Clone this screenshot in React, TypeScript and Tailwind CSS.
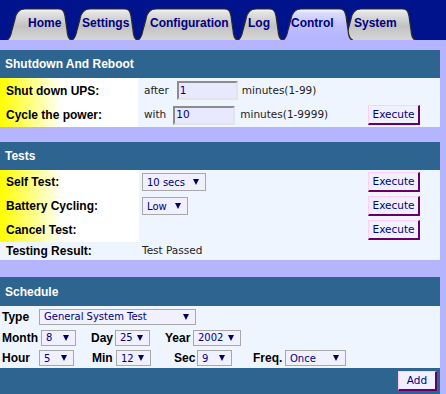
import React from "react";

const tabs = [
  { label: "Home", w: 65, cls: "w-[65px] pl-[21px]" },
  { label: "Settings", w: 66, cls: "w-[66px] pl-[10px]" },
  { label: "Configuration", w: 100, cls: "w-[100px] pl-[12px]" },
  { label: "Log", w: 45, cls: "w-[45px] pl-[10px]" },
  { label: "Control", w: 70, cls: "w-[70px] pl-[8px] z-10", active: true },
  { label: "System", w: 73, cls: "w-[73px] pl-[11px] -ml-[10px]" },
];

function tabPath(w: number) {
  return `M0,32 C3,31 4,27 5,22 L8,11 C9,5 12,1 18,1 L${w - 14},1 C${w - 9},1 ${w - 8},3 ${w - 7},8 L${w - 5},22 C${w - 4.5},29 ${w - 2},32 ${w},32`;
}

function Tab({ label, w, cls, active }: { label: string; w: number; cls: string; active?: boolean }) {
  const id = `tabfill-${label}`;
  return (
    <div className={`relative flex h-[32px] items-center pb-[3px] ${cls}`}>
      <svg className="absolute inset-0" width={w} height={32} viewBox={`0 0 ${w} 32`}>
        <defs>
          <linearGradient id={id} x1="0" y1="0" x2="0" y2="1">
            {active ? (
              <>
                <stop offset="0" stopColor="#ffffff" />
                <stop offset="0.12" stopColor="#dcdcff" />
                <stop offset="0.6" stopColor="#bdbdff" />
                <stop offset="1" stopColor="#b4b4ff" />
              </>
            ) : (
              <>
                <stop offset="0" stopColor="#ffffff" />
                <stop offset="0.1" stopColor="#e4e4e4" />
                <stop offset="0.55" stopColor="#c2c2c2" />
                <stop offset="1" stopColor="#d6d6d6" />
              </>
            )}
          </linearGradient>
        </defs>
        <path d={tabPath(w)} fill={`url(#${id})`} stroke="#2a2a2a" strokeWidth="1.2" />
      </svg>
      <span className="relative text-[12px] font-bold text-[#000080]">{label}</span>
    </div>
  );
}

function Tri() {
  return (
    <svg width="6" height="6" viewBox="0 0 6 6" className="shrink-0">
      <path d="M0 0H6L3 6Z" fill="#000060" />
    </svg>
  );
}

function Select({ value, cls }: { value: string; cls: string }) {
  return (
    <span
      className={`flex items-center justify-between border border-[#a8a8a8] bg-[#f0f0ff] pl-[4px] pr-[6px] font-['DejaVu_Sans',sans-serif] text-[10px] text-[#000080] ${cls}`}
    >
      {value}
      <Tri />
    </span>
  );
}

function Button({ children, cls }: { children: React.ReactNode; cls: string }) {
  return (
    <button
      className={`flex items-center justify-center border-t border-l border-r-2 border-b-2 border-t-[#ffccff] border-l-[#ffccff] border-r-[#660066] border-b-[#660066] bg-[#f0f0ff] font-['DejaVu_Sans',sans-serif] text-[10.5px] text-[#000080] ${cls}`}
    >
      {children}
    </button>
  );
}

function Field({ value, cls }: { value: string; cls: string }) {
  return (
    <span
      className={`flex h-[19px] items-center border-2 border-t-[#8c8c8c] border-l-[#8c8c8c] border-r-[#e4e4e4] border-b-[#e4e4e4] bg-[#e8e8ff] pl-[1px] font-['DejaVu_Sans',sans-serif] text-[10.5px] text-[#000080] ${cls}`}
    >
      {value}
    </span>
  );
}

const header = "flex items-center bg-[#2e6590] px-[5px] text-[12px] font-bold text-white";
const yellow = "flex items-center bg-[linear-gradient(90deg,#ffff00_0%,#ffffff_45%)] pl-[6px] text-[12px] font-bold text-black";
const plain = "font-['DejaVu_Sans',sans-serif] text-[10.5px] text-[#222]";
const bold = "text-[12px] font-bold text-black";

export default function App() {
  return (
    <div className="h-[394px] w-[446px] overflow-hidden bg-[#b4b4ff] font-['Liberation_Sans',Arial,sans-serif]">
      <nav className="flex h-[40px] items-end bg-[#00128c] pl-[7px]">
        {tabs.map((t) => (
          <Tab key={t.label} {...t} />
        ))}
      </nav>

      <main className="flex flex-col pt-[10px] pr-[6px]">
        <section>
          <div className={`${header} h-[28px]`}>Shutdown And Reboot</div>
          <div className="grid grid-cols-[138px_230px_1fr] bg-[#eef5ff]">
            <div className={`${yellow} h-[25px]`}>Shut down UPS:</div>
            <div className={`flex items-center pl-[6px] ${plain}`}>
              after
              <Field value="1" cls="ml-[8px] w-[61px]" />
              <span className="ml-[4px]">minutes(1-99)</span>
            </div>
            <div />
            <div className={`${yellow} h-[24px]`}>Cycle the power:</div>
            <div className={`flex items-center pl-[6px] ${plain}`}>
              with
              <Field value="10" cls="ml-[7px] w-[62px]" />
              <span className="ml-[5px]">minutes(1-9999)</span>
            </div>
            <div className="flex items-center">
              <Button cls="h-[20px] w-[52px]">Execute</Button>
            </div>
          </div>
        </section>

        <section className="mt-[15px]">
          <div className={`${header} h-[28px]`}>Tests</div>
          <div className="grid grid-cols-[139px_229px_1fr] bg-[#eef5ff]">
            <div className={`${yellow} h-[24px]`}>Self Test:</div>
            <div className="flex items-center pl-[3px]">
              <Select value="10 secs" cls="h-[18px] w-[64px]" />
            </div>
            <div className="flex items-center">
              <Button cls="h-[20px] w-[52px]">Execute</Button>
            </div>
            <div className={`${yellow} h-[24px]`}>Battery Cycling:</div>
            <div className="flex items-center pl-[3px]">
              <Select value="Low" cls="h-[18px] w-[46px]" />
            </div>
            <div className="flex items-center">
              <Button cls="h-[20px] w-[52px]">Execute</Button>
            </div>
            <div className={`${yellow} h-[24px]`}>Cancel Test:</div>
            <div />
            <div className="flex items-center">
              <Button cls="h-[20px] w-[52px]">Execute</Button>
            </div>
            <div className={`flex h-[18px] items-center pl-[6px] ${bold}`}>Testing Result:</div>
            <div className={`flex items-center pl-[3px] ${plain}`}>Test Passed</div>
            <div />
          </div>
        </section>

        <section className="mt-[17px]">
          <div className={`${header} h-[29px]`}>Schedule</div>
          <div className="flex flex-col bg-[#eef5ff] pl-[2px]">
            <div className="flex h-[21px] items-center">
              <span className={`w-[37px] ${bold}`}>Type</span>
              <Select value="General System Test" cls="h-[16px] w-[157px]" />
            </div>
            <div className="flex h-[21px] items-center">
              <span className={`w-[39px] ${bold}`}>Month</span>
              <Select value="8" cls="h-[16px] w-[35px]" />
              <span className={`ml-[15px] w-[24px] ${bold}`}>Day</span>
              <Select value="25" cls="h-[16px] w-[35px]" />
              <span className={`ml-[15px] w-[28px] ${bold}`}>Year</span>
              <Select value="2002" cls="h-[16px] w-[48px]" />
            </div>
            <div className="flex h-[20px] items-center">
              <span className={`w-[37px] ${bold}`}>Hour</span>
              <Select value="5" cls="h-[16px] w-[35px]" />
              <span className={`ml-[18px] w-[24px] ${bold}`}>Min</span>
              <Select value="12" cls="h-[16px] w-[35px]" />
              <span className={`ml-[23px] w-[23px] ${bold}`}>Sec</span>
              <Select value="9" cls="h-[16px] w-[35px]" />
              <span className={`ml-[21px] w-[32px] ${bold}`}>Freq.</span>
              <Select value="Once" cls="h-[16px] w-[61px]" />
            </div>
          </div>
          <div className="flex h-[26px] items-start justify-end bg-[#2e6590] pt-[3px] pr-[3px]">
            <Button cls="h-[20px] w-[39px]">Add</Button>
          </div>
        </section>
      </main>
    </div>
  );
}
